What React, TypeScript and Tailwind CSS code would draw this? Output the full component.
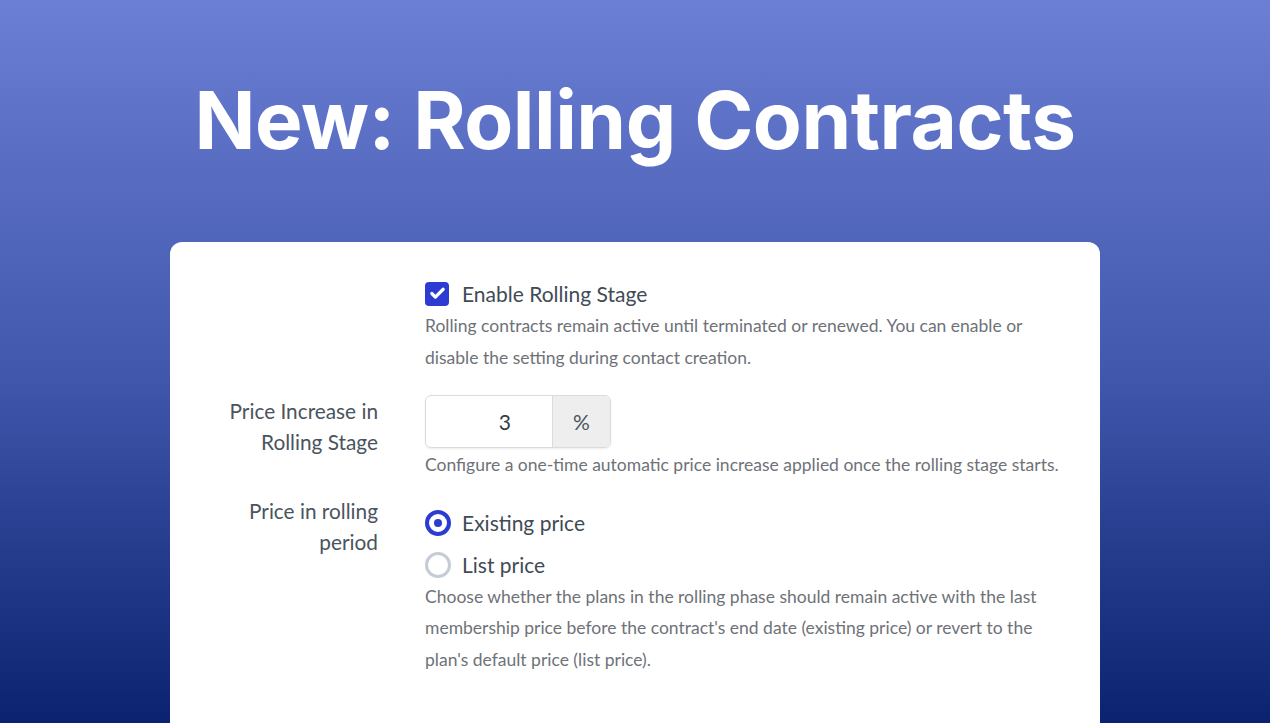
import { Check } from "lucide-react";

const body = { fontFamily: "Lato, 'Open Sans', sans-serif" };

function Radio({ checked, label }: { checked: boolean; label: string }) {
  return (
    <label className="flex items-center h-[31px] gap-[11px]">
      {checked ? (
        <span className="w-[26px] h-[26px] rounded-full border-[4px] border-[#2c3bd1] flex items-center justify-center">
          <span className="w-[8px] h-[8px] rounded-full bg-[#2c3bd1]" />
        </span>
      ) : (
        <span className="w-[26px] h-[26px] rounded-full border-[3px] border-[#c6cbd7]" />
      )}
      <span className="text-[21px] text-[#414b55]">{label}</span>
    </label>
  );
}

export default function App() {
  return (
    <div className="h-[723px] w-full overflow-hidden bg-gradient-to-b from-[#6b7fd4] via-[#4359ae] to-[#0b2270]">
      {/* Heading */}
      <div className="h-[242px] flex justify-center pt-[68px]">
        <h1
          className="text-white font-bold text-[80px] leading-[104px] tracking-[-0.5px]"
          style={{ fontFamily: "Inter, sans-serif" }}
        >
          New: Rolling Contracts
        </h1>
      </div>

      {/* Settings card */}
      <div className="mx-auto w-[930px] h-[520px] bg-white rounded-t-[12px] pt-[36px]" style={body}>
        <div className="grid grid-cols-[208px_645px] gap-x-[47px]">
          {/* Row 1 */}
          <div />
          <div>
            <div className="flex items-center h-[31px] gap-[13px]">
              <span className="w-[24px] h-[24px] rounded-[4px] bg-[#2c3bd1] flex items-center justify-center">
                <Check className="w-[17px] h-[17px] text-white" strokeWidth={4.5} />
              </span>
              <span className="text-[21px] text-[#414b55]">Enable Rolling Stage</span>
            </div>
            <p className="mt-[1px] text-[17.5px] leading-[31.5px] text-[#6e7278]">
              Rolling contracts remain active until terminated or renewed. You can enable or disable the setting during contact creation.
            </p>
          </div>

          {/* Row 2 */}
          <div className="mt-[22px] text-right text-[20.8px] leading-[31px] text-[#4a545e]">
            Price Increase in
            <br />
            Rolling Stage
          </div>
          <div className="mt-[22px]">
            <div className="flex w-[186px] h-[53px] rounded-[6px] border border-[#d9dbdf] shadow-[0_1px_2px_rgba(0,0,0,0.08)] overflow-hidden">
              <div className="flex-1 flex items-center justify-end pr-[41px] text-[21px] text-[#333a41]">3</div>
              <div className="w-[58px] bg-[#eeeeee] border-l border-[#d9dbdf] flex items-center justify-center text-[21px] text-[#4a545e]">
                %
              </div>
            </div>
            <p className="mt-[1px] text-[17.5px] leading-[31.5px] text-[#6e7278] whitespace-nowrap">
              Configure a one-time automatic price increase applied once the rolling stage starts.
            </p>
          </div>

          {/* Row 3 */}
          <div className="mt-[14px] text-right text-[20.8px] leading-[31px] text-[#4a545e]">
            Price in rolling
            <br />
            period
          </div>
          <div className="mt-[27px] flex flex-col">
            <div className="flex flex-col gap-[11px]">
              <Radio checked label="Existing price" />
              <Radio checked={false} label="List price" />
            </div>
            <p className="text-[17.5px] leading-[31.5px] text-[#6e7278]">
              Choose whether the plans in the rolling phase should remain active with the last membership price before the contract's end date (existing price) or revert to the plan's default price (list price).
            </p>
          </div>
        </div>
      </div>
    </div>
  );
}
